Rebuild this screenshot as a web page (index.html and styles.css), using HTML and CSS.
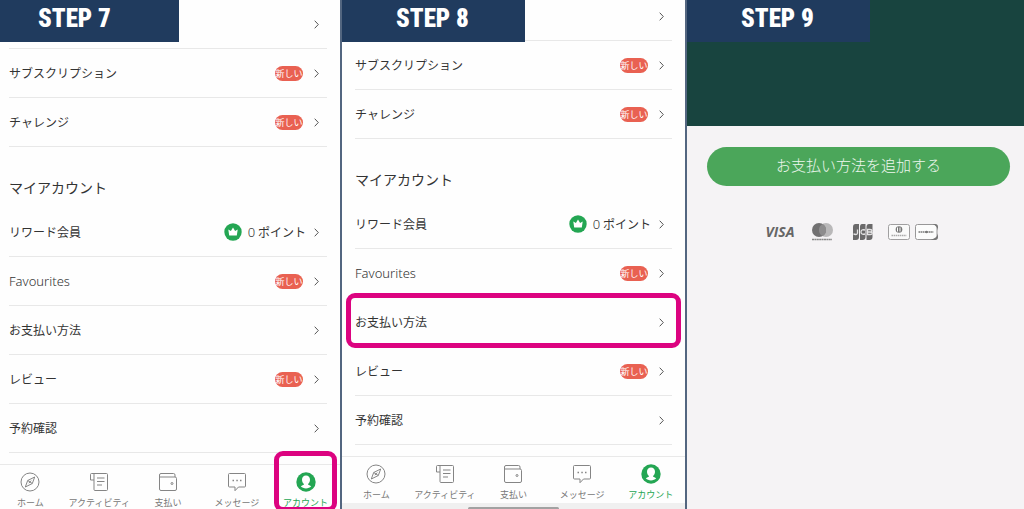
FILE: index.html
```html
<!DOCTYPE html>
<html lang="ja">
<head>
    <meta charset="UTF-8">
    <meta name="viewport" content="width=device-width, initial-scale=1.0">
    <title>お支払い方法の追加</title>
    <link rel="stylesheet" href="styles.css">
</head>
<body>

<svg class="sprite" aria-hidden="true">
    <symbol id="chevron" viewBox="0 0 5 9"><path d="M.7.7 4.3 4.5.7 8.3"/></symbol>
    <symbol id="crown" viewBox="0 0 18 18">
        <circle cx="9" cy="9" r="8.7" fill="#24a653"/>
        <path fill="#fff" d="M4.3 6.4 6.9 8 9 4.6 11.1 8l2.6-1.6-.9 6.2H5.2z"/>
    </symbol>
    <symbol id="home" viewBox="0 0 20 20">
        <circle cx="10" cy="10" r="9"/>
        <path d="M14.7 5 12.3 11.5 5.3 15 7.7 8.5zM7.7 8.5l4.6 3M8.8 11.2l2.4-2.6"/>
    </symbol>
    <symbol id="activity" viewBox="0 0 20 20">
        <path d="M5 1.5h12.5q1 0 1 1v15q0 1-1 1H6q-1 0-1-1zM5 1.5H2.5q-1 0-1 1V8H5M8 6h7.5M8 9.5h7.5M8 13h5"/>
    </symbol>
    <symbol id="wallet" viewBox="0 0 20 20">
        <path d="M1.5 5V3q0-1.5 1.5-1.5h12.5q1.5 0 1.5 1.5v2M1.5 5H17q1.5 0 1.5 1.5V17q0 1.5-1.5 1.5H3q-1.5 0-1.5-1.5z"/>
        <circle cx="14" cy="11.5" r="1"/>
    </symbol>
    <symbol id="message" viewBox="0 0 20 20">
        <path d="M2.5 1.5h15q1 0 1 1V14q0 1-1 1h-6L8 18.7V15H2.5q-1 0-1-1V2.5q0-1 1-1z"/>
        <path d="M5.5 8.5H7M9.3 8.5h1.5M13 8.5h1.5" stroke-width="1.6"/>
    </symbol>
    <symbol id="account" viewBox="0 0 20 20">
        <circle cx="10" cy="10" r="9.7" fill="#24a653" stroke="none"/>
        <path fill="#fff" stroke="none" d="M10 3.5c2.5 0 4 1.8 4 4.3 0 1.9-.8 3.4-2 4.2v.5l3.2 1.8C13.9 15.6 12.1 16.4 10 16.4s-3.9-.8-5.2-2.1L8 12.5V12c-1.200-.8-2-2.300-2-4.200 0-2.500 1.500-4.300 4-4.300z"/>
    </symbol>
</svg>

<main class="steps">
    <section class="step step-7">
        <h1 class="step-label">STEP 7</h1>
        <div class="screen">
            <ul class="menu">
                <li><a href="#" aria-label="メニュー"><svg class="chevron"><use href="#chevron"/></svg></a></li>
                <li><a href="#"><span class="name">サブスクリプション</span><span class="badge">新しい</span><svg class="chevron"><use href="#chevron"/></svg></a></li>
                <li><a href="#"><span class="name">チャレンジ</span><span class="badge">新しい</span><svg class="chevron"><use href="#chevron"/></svg></a></li>
            </ul>
            <h2>マイアカウント</h2>
            <ul class="menu">
                <li><a href="#"><span class="name">リワード会員</span><span class="points"><svg class="crown"><use href="#crown"/></svg><span><span class="latin">0</span> ポイント</span></span><svg class="chevron"><use href="#chevron"/></svg></a></li>
                <li><a href="#"><span class="name latin">Favourites</span><span class="badge">新しい</span><svg class="chevron"><use href="#chevron"/></svg></a></li>
                <li><a href="#"><span class="name">お支払い方法</span><svg class="chevron"><use href="#chevron"/></svg></a></li>
                <li><a href="#"><span class="name">レビュー</span><span class="badge">新しい</span><svg class="chevron"><use href="#chevron"/></svg></a></li>
                <li><a href="#"><span class="name">予約確認</span><svg class="chevron"><use href="#chevron"/></svg></a></li>
            </ul>
            <nav class="tabs">
                <a href="#"><svg><use href="#home"/></svg>ホーム</a>
                <a href="#"><svg><use href="#activity"/></svg>アクティビティ</a>
                <a href="#"><svg><use href="#wallet"/></svg>支払い</a>
                <a href="#"><svg><use href="#message"/></svg>メッセージ</a>
                <a href="#" class="active marked"><svg><use href="#account"/></svg>アカウント</a>
            </nav>
        </div>
    </section>

    <section class="step step-8">
        <h1 class="step-label">STEP 8</h1>
        <div class="screen">
            <ul class="menu">
                <li><a href="#" aria-label="メニュー"><svg class="chevron"><use href="#chevron"/></svg></a></li>
                <li><a href="#"><span class="name">サブスクリプション</span><span class="badge">新しい</span><svg class="chevron"><use href="#chevron"/></svg></a></li>
                <li><a href="#"><span class="name">チャレンジ</span><span class="badge">新しい</span><svg class="chevron"><use href="#chevron"/></svg></a></li>
            </ul>
            <h2>マイアカウント</h2>
            <ul class="menu">
                <li><a href="#"><span class="name">リワード会員</span><span class="points"><svg class="crown"><use href="#crown"/></svg><span><span class="latin">0</span> ポイント</span></span><svg class="chevron"><use href="#chevron"/></svg></a></li>
                <li><a href="#"><span class="name latin">Favourites</span><span class="badge">新しい</span><svg class="chevron"><use href="#chevron"/></svg></a></li>
                <li><a href="#" class="marked"><span class="name">お支払い方法</span><svg class="chevron"><use href="#chevron"/></svg></a></li>
                <li><a href="#"><span class="name">レビュー</span><span class="badge">新しい</span><svg class="chevron"><use href="#chevron"/></svg></a></li>
                <li><a href="#"><span class="name">予約確認</span><svg class="chevron"><use href="#chevron"/></svg></a></li>
            </ul>
            <nav class="tabs">
                <a href="#"><svg><use href="#home"/></svg>ホーム</a>
                <a href="#"><svg><use href="#activity"/></svg>アクティビティ</a>
                <a href="#"><svg><use href="#wallet"/></svg>支払い</a>
                <a href="#"><svg><use href="#message"/></svg>メッセージ</a>
                <a href="#" class="active"><svg><use href="#account"/></svg>アカウント</a>
            </nav>
            <div class="system-bar"><span class="handle"></span></div>
        </div>
    </section>

    <section class="step step-9">
        <h1 class="step-label">STEP 9</h1>
        <div class="banner"></div>
        <div class="payment">
            <button type="button" class="add-button">お支払い方法を追加する</button>
            <div class="cards">
                <span class="visa">VISA</span>
                <svg width="24" height="18" viewBox="0 0 24 18" role="img" aria-label="mastercard">
                    <circle cx="16" cy="7" r="7" fill="#b9b8b9"/>
                    <circle cx="9" cy="7" r="7" fill="#717071"/>
                    <path d="M12.5.9a7 7 0 0 1 0 12.2 7 7 0 0 1 0-12.2z" fill="#8d8c8d"/>
                    <path d="M2 16.5h20" stroke="#888" stroke-width="1.5" stroke-dasharray="2 .4"/>
                </svg>
                <svg width="26" height="18" viewBox="0 0 26 18" role="img" aria-label="JCB">
                    <path fill="#6a696a" d="M7.5 1H11v13q0 3-3 3H5V4q0-3 2.5-3zM14 1h3.5v13q0 3-3 3H12V4q0-3 2-3zM21 1h3.5v13q0 3-3 3h-3V4q0-3 2.500-3z"/>
                    <g fill="none" stroke="#e4e3e4" stroke-width="1.3">
                        <path d="M9.5 6.5V10q0 1.500-1.700 1.500L5.500 11M17 7q-4-1-4 2t4 2M19.500 6.500H22q2 0 2 1.200T22 9h-2.500zM19.500 9H22q2.200 0 2.200 1.300T22 11.500h-2.500z"/>
                    </g>
                </svg>
                <div class="card-pair">
                    <svg width="22" height="16" viewBox="0 0 22 16" role="img" aria-label="Diners Club">
                        <rect x=".5" y=".5" width="21" height="15" rx="2" fill="#fafafa" stroke="#a09fa0"/>
                        <circle cx="11" cy="5.5" r="3.3" fill="#777"/>
                        <path d="M9.5 3.5v4M12 3.5v4" stroke="#fff"/>
                        <path d="M3.5 11.5h15" stroke="#aaa" stroke-width="1.5" stroke-dasharray="1.5 .6"/>
                    </svg>
                    <svg width="23" height="16" viewBox="0 0 23 16" role="img" aria-label="Discover">
                        <rect x=".5" y=".5" width="21.5" height="15" rx="2" fill="#fcfcfc" stroke="#989798"/>
                        <path fill="#777" d="M17.5 0H20q3 0 3 3v3.5Q22 1.5 17.5 0zM23 9.5V13q0 3-3 3h-4.500Q22 14 23 9.500z"/>
                        <path d="M3.5 8h15" stroke="#777" stroke-width="1.5" stroke-dasharray="1.6 .5"/>
                        <circle cx="11.5" cy="8" r="1.2" fill="#777"/>
                    </svg>
                </div>
            </div>
        </div>
    </section>
</main>

</body>
</html>
```
FILE: styles.css
```css
* {
    box-sizing: border-box;
}
body {
    margin: 0;
    background-color: #fefefe;
    color: #333;
    font-family: "Noto Sans CJK JP", sans-serif;
    font-size: 12px;
}
a {
    color: inherit;
    text-decoration: none;
}
svg {
    display: block;
    flex: none;
}
.sprite {
    position: absolute;
    width: 0;
    height: 0;
}
.steps {
    display: grid;
    grid-template-columns: 342fr 345fr 337fr;
    height: 100vh;
    overflow: hidden;
}
.step {
    position: relative;
    min-width: 0;
    overflow: hidden;
}
.step-7, .step-8 {
    border-right: 2px solid #536680;
}
.step-label {
    position: absolute;
    top: 0;
    left: 0;
    z-index: 1;
    width: 183px;
    margin: 0;
    padding: 0 0 4px 54px;
    background-color: #203b5e;
    color: white;
    font-family: Impact, "Roboto Condensed", sans-serif;
    font-weight: 900;
    font-size: 25px;
    line-height: 38px;
    white-space: nowrap;
}
.step-7 .step-label {
    width: 179px;
    padding-left: 38px;
}

/* account screen */
.step-7 .screen {
    margin-left: -4px;
}
.step-8 .screen {
    margin-top: -8px;
}
.menu {
    margin: 0;
    padding: 0 13px;
    list-style: none;
}
.menu a {
    position: relative;
    display: flex;
    align-items: center;
    height: 49px;
    padding-right: 8px;
    border-bottom: 1px solid #e8e8e8;
}
.name {
    line-height: 20px;
}
.latin {
    font-family: "Noto Sans", sans-serif;
    font-weight: 300;
    font-size: 13px;
}
.chevron {
    width: 5px;
    height: 9px;
    margin-left: auto;
    fill: none;
    stroke: #555;
}
.badge, .points {
    margin-left: auto;
}
.badge + .chevron {
    margin-left: 11px;
}
.points + .chevron {
    margin-left: 8px;
}
.badge {
    width: 28px;
    border-radius: 8px;
    background-color: #e96152;
    color: white;
    font-size: 9px;
    line-height: 15px;
    text-align: center;
    white-space: nowrap;
}
.points {
    display: flex;
    align-items: center;
    gap: 6px;
}
.crown {
    width: 18px;
    height: 18px;
}
h2 {
    margin: 0;
    padding: 28px 13px 9px;
    font-weight: normal;
    font-size: 14px;
    line-height: 24px;
}
.tabs {
    display: grid;
    grid-template-columns: repeat(5, 1fr);
    margin-top: 11px;
    border-top: 1px solid #e9e9e9;
}
.tabs a {
    position: relative;
    display: flex;
    flex-direction: column;
    align-items: center;
    gap: 4px;
    padding: 7px 0 1px;
    color: #777;
    font-size: 9px;
    line-height: 14px;
    white-space: nowrap;
}
.tabs svg {
    width: 20px;
    height: 20px;
    fill: none;
    stroke: #858585;
}
.tabs .active {
    color: #24a653;
}
.marked::after {
    content: "";
    position: absolute;
    border: 5px solid #dc0380;
    border-radius: 9px;
}
.menu .marked::after {
    inset: -5px -9px -2px;
}
.tabs .marked::after {
    inset: -14px 3px -1px;
}
.system-bar {
    height: 7px;
    padding-top: 4px;
    background-color: #f0f0f0;
}
.handle {
    display: block;
    width: 91px;
    height: 3px;
    margin: 0 auto;
    border-radius: 2px;
    background-color: #a2a2a2;
}

/* payment screen */
.step-9 {
    background-color: #f5f3f5;
}
.banner {
    height: 126px;
    background-color: #18443f;
}
.payment {
    padding: 21px 14px 0 20px;
}
.add-button {
    display: block;
    width: 100%;
    height: 39px;
    padding: 0 0 4px;
    border: 0;
    border-radius: 20px;
    background-color: #4ba65a;
    color: #eef7ef;
    font: inherit;
    font-weight: 300;
    font-size: 15px;
}
.cards {
    display: flex;
    justify-content: center;
    align-items: center;
    gap: 14px;
    padding: 37px 14px 0 0;
}
.visa {
    width: 30px;
    color: #666;
    font-family: "Open Sans", sans-serif;
    font-weight: bold;
    font-style: italic;
    font-size: 14px;
    line-height: 18px;
}
.card-pair {
    display: flex;
    gap: 5px;
}
```
